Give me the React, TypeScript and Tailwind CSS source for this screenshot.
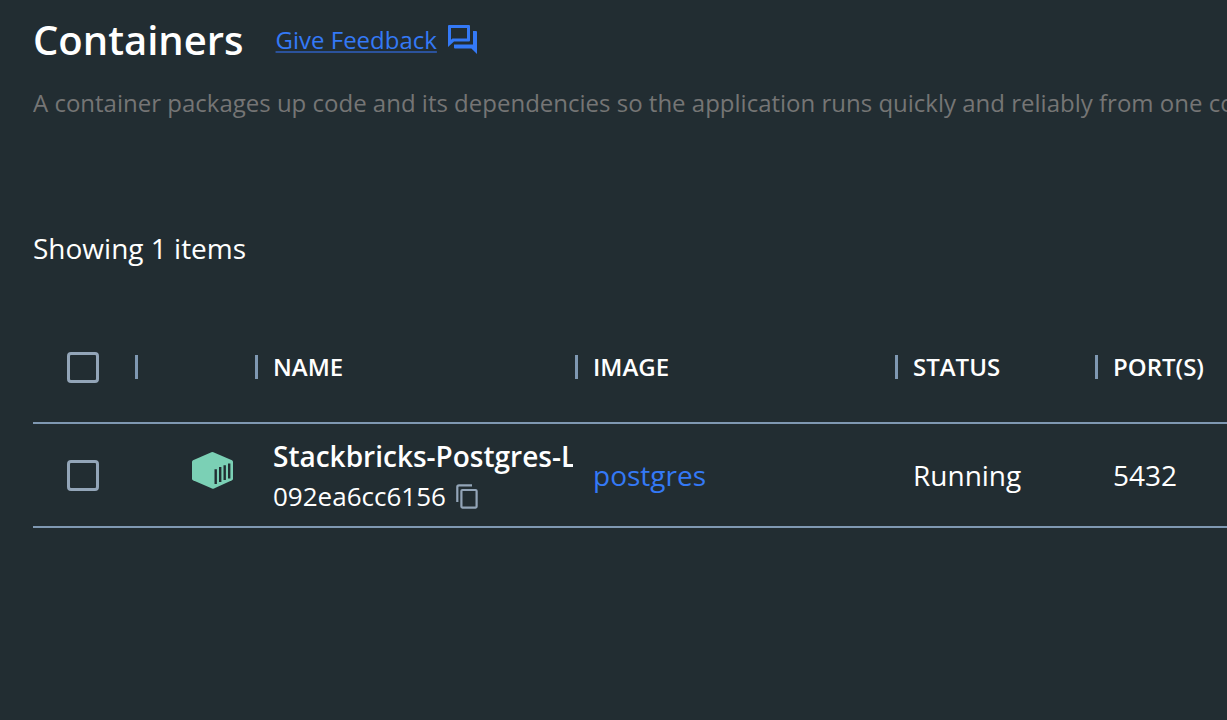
import React from "react";

const columns = ["NAME", "IMAGE", "STATUS", "PORT(S)"];

const containers = [
  {
    id: "092ea6cc6156",
    name: "Stackbricks-Postgres-L",
    image: "postgres",
    status: "Running",
    ports: "5432",
  },
];

function FeedbackIcon() {
  return (
    <svg viewBox="0 0 29 29" className="mb-[2px] size-[29px] shrink-0 fill-[#3479f6]" aria-hidden="true">
      <path
        fillRule="evenodd"
        d="M1 0H21Q22 0 22 1V15.4Q22 16.4 21 16.4H6L0 22V1Q0 0 1 0ZM3 3V14.8L4.4 13.4H19V3Z"
      />
      <path d="M25 6H28Q29 6 29 7V29L23.4 23.4H7Q6 23.4 6 22.4V19.4H25Z" />
    </svg>
  );
}

function ContainerIcon() {
  return (
    <svg viewBox="0 0 41 37" className="block h-[37px] w-[41px]" aria-hidden="true">
      <path
        fill="#7bd0b5"
        d="M19.4.3Q20.4-.1 21.4.3L40 8.3Q41 8.8 41 9.8V26.8Q41 27.8 40 28.3L22 36.6Q21 37 20 36.6L1 28.3Q0 27.8 0 26.8V9.8Q0 8.8 1 8.3Z"
      />
      <path
        stroke="#222d32"
        strokeWidth="2.4"
        d="M23.7 17.2V32M28.2 15V30M32.7 13.2V28M37.2 11.6V26.4"
      />
    </svg>
  );
}

function CopyIcon() {
  return (
    <svg viewBox="0 0 22 25" className="block h-[25px] w-[22px] fill-none stroke-[#93a5b8]" strokeWidth="2.2" aria-hidden="true">
      <path d="M16 1.3H3Q1.3 1.3 1.3 3V18" />
      <rect x="5.4" y="6" width="15.2" height="17.6" rx="1" />
    </svg>
  );
}

function Checkbox({ label }: { label: string }) {
  return (
    <input
      type="checkbox"
      aria-label={label}
      className="ml-[34px] block h-[31px] w-8 appearance-none rounded-[4px] border-[3px] border-[#93a5b8] checked:bg-[#93a5b8]"
    />
  );
}

function Divider() {
  return <span className="ml-[2px] block h-6 w-[3px] bg-[#7f98b2]" />;
}

export default function App() {
  return (
    <main className="min-h-screen overflow-hidden bg-[#222d32] pt-3 pl-[33px] font-['Open_Sans',sans-serif] text-white">
      <header className="flex h-14 items-center">
        <h1 className="text-[40px] leading-[56px] font-semibold">Containers</h1>
        <a
          href="#feedback"
          className="ml-8 flex items-center gap-[11px] text-2xl text-[#3479f6]"
        >
          <span className="underline decoration-[#2b529c] decoration-2 underline-offset-2">Give Feedback</span>
          <FeedbackIcon />
        </a>
      </header>
      <p className="mt-[19px] overflow-hidden text-2xl whitespace-nowrap text-[#757575]">
        A container packages up code and its dependencies so the application runs quickly and reliably from one
        computing environment to another.
      </p>
      <p className="mt-[109px] text-[28px] leading-10">Showing 1 items</p>

      <table className="mt-11 w-full table-fixed border-collapse text-left">
        <colgroup>
          <col className="w-[100px]" />
          <col className="w-[120px]" />
          <col className="w-[320px]" />
          <col className="w-[320px]" />
          <col className="w-[200px]" />
          <col />
        </colgroup>
        <thead>
          <tr className="h-[111px] border-b-2 border-[#7f98b2]">
            <th className="p-0">
              <Checkbox label="Select all containers" />
            </th>
            <th className="p-0">
              <Divider />
            </th>
            {columns.map((title) => (
              <th key={title} className="p-0 text-2xl font-semibold">
                <div className="flex items-center gap-[15px]">
                  <Divider />
                  {title}
                </div>
              </th>
            ))}
          </tr>
        </thead>
        <tbody>
          {containers.map((item) => (
            <tr key={item.id} className="h-[104px] border-b-2 border-[#7f98b2] text-[28px]">
              <td className="p-0">
                <Checkbox label={`Select ${item.name}`} />
              </td>
              <td className="p-0 pb-[10px] pl-[59px]">
                <ContainerIcon />
              </td>
              <td className="p-0 pt-[2px] pl-5">
                <div className="overflow-hidden leading-10 font-semibold whitespace-nowrap">{item.name}</div>
                <div className="flex items-center gap-[10px] text-[26px] leading-10">
                  {item.id}
                  <button type="button" aria-label="Copy container ID">
                    <CopyIcon />
                  </button>
                </div>
              </td>
              <td className="p-0 pl-5">
                <a href="#image" className="text-[#3479f6]">
                  {item.image}
                </a>
              </td>
              <td className="p-0 pl-5">{item.status}</td>
              <td className="p-0 pl-5">{item.ports}</td>
            </tr>
          ))}
        </tbody>
      </table>
    </main>
  );
}
